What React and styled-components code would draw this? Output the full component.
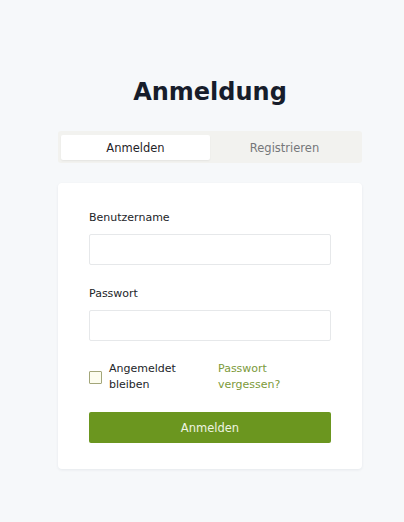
import React, { useState } from "react";
import styled, { createGlobalStyle } from "styled-components";

const GlobalStyle = createGlobalStyle`
  html, body {
    margin: 0;
    padding: 0;
    background: #f6f8fa;
    font-family: "DejaVu Sans", "Noto Sans", sans-serif;
  }
`;

const Page = styled.div`
  min-height: 522px;
  display: flex;
  flex-direction: column;
  align-items: center;
  padding: 75px 0 0 16px;
  box-sizing: border-box;
`;

const Title = styled.h1`
  margin: 0 0 22px;
  font-size: 24px;
  line-height: 34px;
  font-weight: 700;
  color: #171d2b;
`;

const Tabs = styled.div`
  width: 304px;
  box-sizing: border-box;
  display: grid;
  grid-template-columns: 1fr 1fr;
  padding: 4px 3px 3px;
  background: #f2f2ef;
  border-radius: 3px;
`;

const Tab = styled.button`
  border: none;
  height: 25px;
  padding: 0;
  font-family: inherit;
  font-size: 11.5px;
  cursor: pointer;
  border-radius: 2px;
  background: ${(p) => (p.$active ? "#ffffff" : "transparent")};
  color: ${(p) => (p.$active ? "#1f2328" : "#75777a")};
  box-shadow: ${(p) => (p.$active ? "0 1px 2px rgba(0,0,0,0.06)" : "none")};
`;

const Card = styled.form`
  margin-top: 20px;
  width: 304px;
  box-sizing: border-box;
  padding: 27px 31px 26px;
  background: #ffffff;
  border-radius: 4px;
  box-shadow: 0 1px 3px rgba(20, 30, 50, 0.07);
  display: flex;
  flex-direction: column;
`;

const Label = styled.label`
  font-size: 11px;
  line-height: 16px;
  color: #222529;
  margin-bottom: 8px;
`;

const Input = styled.input`
  height: 31px;
  box-sizing: border-box;
  border: 1px solid #e6e8ea;
  border-radius: 2px;
  padding: 0 8px;
  font-family: inherit;
  font-size: 11px;
  margin-bottom: ${(p) => p.$gap}px;
  outline: none;
`;

const OptionsRow = styled.div`
  display: grid;
  grid-template-columns: 1fr 1fr;
  column-gap: 16px;
  margin-bottom: 19px;
`;

const Remember = styled.label`
  display: flex;
  align-items: center;
  gap: 7px;
  font-size: 11px;
  line-height: 16px;
  color: #222529;
`;

const Box = styled.span`
  flex: none;
  width: 11px;
  height: 11px;
  border: 1px solid #a3a67a;
  background: #fdfdf0;
  border-radius: 1px;
`;

const RememberText = styled.span`
  width: 80px;
`;

const Forgot = styled.a`
  font-size: 11px;
  line-height: 16px;
  color: #7c9a3a;
  text-decoration: none;
  width: 80px;
`;

const Submit = styled.button`
  height: 31px;
  border: none;
  border-radius: 2px;
  background: #6b961f;
  color: #eef4e2;
  font-family: inherit;
  font-size: 11.5px;
  cursor: pointer;
`;

export default function App() {
  const [tab, setTab] = useState(0);
  return (
    <>
      <GlobalStyle />
      <Page>
        <Title>Anmeldung</Title>
        <Tabs>
          <Tab $active={tab === 0} onClick={() => setTab(0)}>Anmelden</Tab>
          <Tab $active={tab === 1} onClick={() => setTab(1)}>Registrieren</Tab>
        </Tabs>
        <Card onSubmit={(e) => e.preventDefault()}>
          <Label>Benutzername</Label>
          <Input $gap={21} />
          <Label>Passwort</Label>
          <Input type="password" $gap={20} />
          <OptionsRow>
            <Remember>
              <Box />
              <RememberText>Angemeldet bleiben</RememberText>
            </Remember>
            <Forgot href="#">Passwort vergessen?</Forgot>
          </OptionsRow>
          <Submit type="submit">Anmelden</Submit>
        </Card>
      </Page>
    </>
  );
}
